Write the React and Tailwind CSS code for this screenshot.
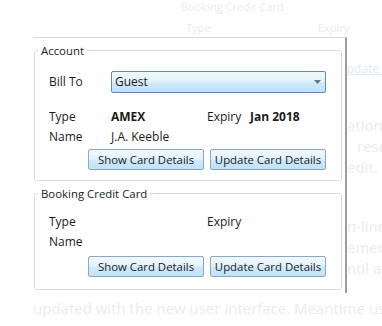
import React from 'react'

const winGrad =
  'bg-[linear-gradient(to_bottom,#f1f8fd_0%,#e3f2fc_48%,#d2eafa_52%,#bfe1f7_100%)]'

function WinButton({ children }) {
  return (
    <button
      className={`h-[21px] w-[116px] rounded-[2px] border border-[#8aa8c2] ${winGrad} text-[11.4px] leading-none text-[#1b1b1b]`}
    >
      {children}
    </button>
  )
}

function CardRows({ type, name, expiry }) {
  return (
    <>
      <div className="flex h-5 items-center">
        <span className="w-[62px]">Type</span>
        <span className="w-[96px] font-bold">{type}</span>
        <span className="w-[43px]">Expiry</span>
        <span className="font-bold">{expiry}</span>
      </div>
      <div className="flex h-5 items-center">
        <span className="w-[62px]">Name</span>
        <span>{name}</span>
      </div>
    </>
  )
}

function GroupBox({ title, children, className }) {
  return (
    <fieldset className={`rounded-[3px] border border-[#d5dde3] pl-[14px] pr-[15px] ${className}`}>
      <legend className="ml-[-11px] px-[3px] text-[11.4px] leading-[17px] text-[#1b1b1b]">{title}</legend>
      {children}
    </fieldset>
  )
}

export default function App() {
  return (
    <div className="relative h-[326px] w-[382px] overflow-hidden bg-white font-['Segoe_UI','Open_Sans',sans-serif] text-[#ebebeb]">
      {/* faded page underneath */}
      <div className="flex flex-col">
        <div className="h-[14px] pl-[181px] text-[11px] leading-[14px]">Booking Credit Card</div>
        <div className="mt-[7px] flex h-[14px] text-[11px] leading-[14px]">
          <span className="w-[318px] pl-[186px]">Type</span>
          <span>Expiry</span>
        </div>
        <div className="mt-[26px] h-[16px] whitespace-nowrap pl-[338px] text-[12px] leading-[16px] text-[#e2e9f2] underline">
          Update Card
        </div>
        <div className="mt-[38px] flex flex-col whitespace-nowrap pl-[347px] text-[15px] leading-[21px]">
          <span>ation</span>
          <span className="pl-[10px]">reso</span>
          <span>edit.</span>
        </div>
        <div className="mt-[38px] flex flex-col whitespace-nowrap pl-[347px] text-[15px] leading-[21px]">
          <span>n-line</span>
          <span>emen</span>
          <span>ntil a</span>
        </div>
        <div className="mt-[19px] whitespace-nowrap pl-[33px] text-[15px] leading-[21px]">
          updated with the new user interface. Meantime use
        </div>
      </div>

      {/* popup panel */}
      <div className="absolute left-[33px] top-[37px] flex h-[256px] w-[314px] flex-col border-t border-r-2 border-[#d6d6d6] border-r-[#9c9c9c] bg-white pl-[1px] pr-[3px] pt-[4px] text-[12px] text-[#1b1b1b]">
        <GroupBox title="Account" className="pb-[10px]">
          <div className="mt-[12px] flex h-[22px] items-center">
            <span className="w-[62px]">Bill To</span>
            <div
              className={`flex h-[22px] flex-1 items-center justify-between rounded-[2px] border border-[#5b8dba] ${winGrad} pl-[3px] pr-[4px]`}
            >
              <span>Guest</span>
              <svg width="7" height="4" viewBox="0 0 7 4">
                <path d="M0 0h7L3.5 4z" fill="#5a7890" />
              </svg>
            </div>
          </div>
          <div className="mt-[14px]">
            <CardRows type="AMEX" name="J.A. Keeble" expiry="Jan 2018" />
          </div>
          <div className="mt-[2px] flex justify-end gap-[6px]">
            <WinButton>Show Card Details</WinButton>
            <WinButton>Update Card Details</WinButton>
          </div>
        </GroupBox>

        <GroupBox title="Booking Credit Card" className="mt-[4px] pb-[12px]">
          <div className="mt-[10px]">
            <CardRows type="" name="" expiry="" />
          </div>
          <div className="mt-[4px] flex justify-end gap-[6px]">
            <WinButton>Show Card Details</WinButton>
            <WinButton>Update Card Details</WinButton>
          </div>
        </GroupBox>
      </div>
    </div>
  )
}
